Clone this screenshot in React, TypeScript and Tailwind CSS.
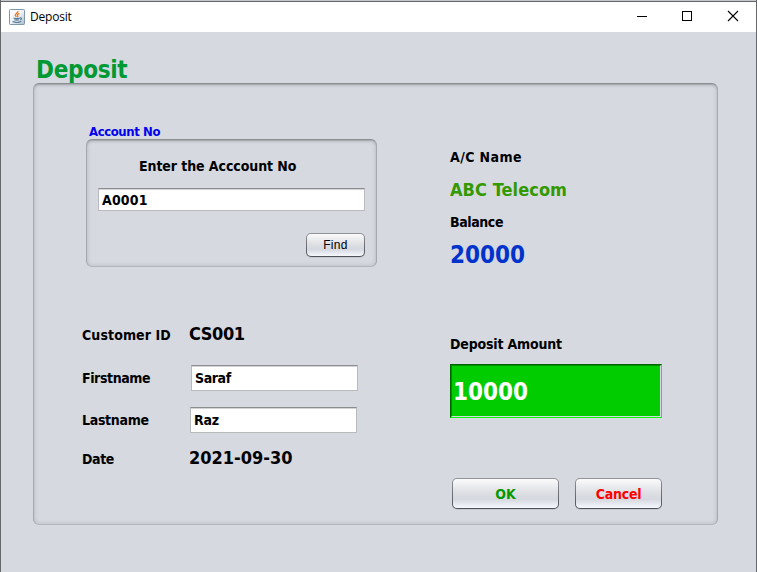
import type { ReactNode } from "react";

const labelClass = "whitespace-nowrap text-[14px] leading-[20px] font-bold text-black";

function JavaIcon() {
  return (
    <svg width="16" height="16" viewBox="0 0 16 16" fill="none">
      <defs>
        <linearGradient id="tile" x1="0" y1="0" x2="1" y2="1">
          <stop offset="0" stopColor="#ffffff" />
          <stop offset="0.5" stopColor="#eef2f5" />
          <stop offset="1" stopColor="#a9bccb" />
        </linearGradient>
      </defs>
      <rect x="0.5" y="0.5" width="15" height="15" rx="0.8" fill="url(#tile)" stroke="#7f97a9" />
      <path d="M8.900 2.200c.5 1.800-3 2.500-2.600 4.200.1.600.8 1 .9 1.700M10.400 4.600C8.600 5.100 8 6 8.600 6.700c.5.600 0 1.200-.5 1.500" stroke="#ee7b1c" strokeWidth="1.3" />
      <path d="M4.500 8.900c1.500.6 5 .6 6.300 0M5.300 10.700c1.300.4 3.500.4 4.700 0M3.500 12.600c2.400.9 6.500.9 8.700 0M11 9c1.900-.5 1.900 1.500.1 2" stroke="#507896" strokeWidth="1.100" />
    </svg>
  );
}

function TitleBar() {
  return (
    <header className="flex h-[30px] items-center bg-white pl-2">
      <JavaIcon />
      <span className="ml-[5px] flex-1 font-['Open_Sans',sans-serif] text-[12px] leading-[16px] tracking-[-0.2px] text-black [font-stretch:normal]">
        Deposit
      </span>
      <svg width="156" height="30" viewBox="600 2 156 30" fill="none" stroke="#000" shapeRendering="crispEdges">
        <path d="M637 16.5h10" />
        <rect x="682.5" y="11.5" width="9" height="9" />
        <path d="M728 11l10 10M738 11l-10 10" shapeRendering="auto" strokeWidth="1.1" />
      </svg>
    </header>
  );
}

function TextField({ value, className }: { value: string; className: string }) {
  return (
    <div
      className={`flex items-center border border-[#b8babd] border-t-[#8b8d91] bg-white pl-[3px] whitespace-nowrap text-[14px] leading-[20px] font-bold text-black shadow-[inset_0_1px_0_#d3d4d6] ${className}`}
    >
      {value}
    </div>
  );
}

function Button({ children, className }: { children: ReactNode; className: string }) {
  return (
    <button
      className={`rounded-[5px] bg-linear-to-b from-[#92959a] to-[#4d5157] p-px shadow-[0_1px_0_#c6c9cf] ${className}`}
    >
      <span className="flex h-full w-full items-center justify-center rounded-[4px] bg-[linear-gradient(#fbfbfc_0%,#e9eaed_28%,#dcdee2_50%,#d5d8df_70%,#e8ebf2_88%,#f6f8fc_100%)]">
        {children}
      </span>
    </button>
  );
}

const etched =
  "rounded-[6px] border border-[#a6a8ad] border-t-[#8c8e93] border-b-[#b4b6bb] shadow-[inset_0_1px_0_#a9acb1,inset_0_2px_2px_#bfc2c8,inset_0_0_4px_#b6b9bf]";

export default function App() {
  return (
    <div className="flex h-[572px] w-[757px] flex-col border-x border-[#66686b] bg-[#d6d9e0] font-['DejaVu_Sans_Condensed','DejaVu_Sans',sans-serif] [font-stretch:condensed]">
      <div className="h-[2px] shrink-0 border-b border-[#66686b] bg-[#c5c6cb]" />
      <TitleBar />
      <main className="pl-[32px]">
        <h1 className="mt-[25px] pl-[3px] text-[24px] leading-[26px] font-bold tracking-[-0.3px] text-[#009933]">
          Deposit
        </h1>
        <section className={`flex h-[442px] w-[685px] ${etched}`}>
          <div className="w-[416px] pl-[48px]">
            <div className="mt-[40px] pl-[7px] text-[13px] leading-[15px] font-bold tracking-[-0.4px] text-[#0000ee]">
              Account No
            </div>
            <div className={`ml-[4px] h-[128px] w-[291px] ${etched}`}>
              <div className={`mt-[16px] pl-[52px] tracking-[-0.08px] ${labelClass}`}>Enter the Acccount No</div>
              <TextField value="A0001" className="mt-[12px] ml-[11px] h-[23px] w-[267px] tracking-[0.15px]" />
              <div className="mt-[22px] flex justify-end pr-[11px]">
                <Button className="h-[24px] w-[59px]">
                  <span className="font-['Liberation_Sans',sans-serif] text-[12px] leading-[16px] tracking-[0.3px]">Find</span>
                </Button>
              </div>
            </div>
            <div className="mt-[55px] flex items-start">
              <div className={`mt-[3px] w-[107px] tracking-[0.1px] ${labelClass}`}>Customer ID</div>
              <div className="text-[18px] leading-[24px] font-bold tracking-[-0.4px]">CS001</div>
            </div>
            <div className="mt-[19px] flex items-center">
              <div className={`w-[109px] tracking-[-0.4px] ${labelClass}`}>Firstname</div>
              <TextField value="Saraf" className="h-[26px] w-[167px] tracking-[-0.4px]" />
            </div>
            <div className="mt-[16px] flex items-center">
              <div className={`w-[108px] tracking-[-0.3px] ${labelClass}`}>Lastname</div>
              <TextField value="Raz" className="h-[26px] w-[167px] tracking-[-0.2px]" />
            </div>
            <div className="mt-[13px] flex items-start">
              <div className={`mt-[3px] w-[107px] tracking-[-0.4px] ${labelClass}`}>Date</div>
              <div className="text-[18px] leading-[24px] font-bold">2021-09-30</div>
            </div>
          </div>
          <div className="w-[212px]">
            <div className={`mt-[63px] tracking-[0.4px] ${labelClass}`}>A/C Name</div>
            <div className="mt-[11px] text-[18px] leading-[24px] font-bold tracking-[0.08px] whitespace-nowrap text-[#339900]">ABC Telecom</div>
            <div className={`mt-[10px] tracking-[-0.4px] ${labelClass}`}>Balance</div>
            <div className="mt-[7px] text-[24px] leading-[32px] font-bold text-[#0033cc]">20000</div>
            <div className={`mt-[63px] tracking-[-0.18px] ${labelClass}`}>Deposit Amount</div>
            <div className="mt-[10px] border border-t-[#006400] border-r-[#00ff00] border-b-[#00ff00] border-l-[#006400]">
              <div className="h-[52px] border border-t-[#008f00] border-r-[#d6d9e0] border-b-[#d6d9e0] border-l-[#008f00] bg-[#00cc00] pt-[10px] pl-px text-[24px] leading-[32px] font-bold text-white">
                10000
              </div>
            </div>
            <div className="mt-[60px] flex justify-between pl-[2px] text-[14px] leading-[20px] font-bold">
              <Button className="h-[31px] w-[107px]">
                <span className="text-[#009900]">OK</span>
              </Button>
              <Button className="h-[31px] w-[87px]">
                <span className="tracking-[-0.25px] text-[#ff0000]">Cancel</span>
              </Button>
            </div>
          </div>
        </section>
      </main>
    </div>
  );
}
